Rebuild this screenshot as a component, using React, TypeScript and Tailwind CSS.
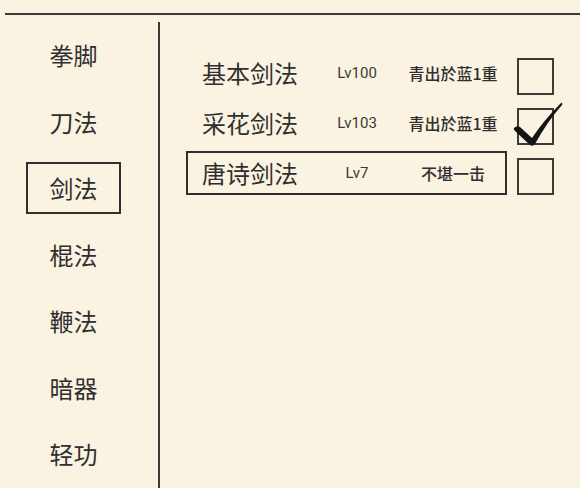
import React from "react";

const MENU = ["拳脚", "刀法", "剑法", "棍法", "鞭法", "暗器", "轻功"];
const SKILLS = [
  { name: "基本剑法", lv: "Lv100", rank: "青出於蓝1重", checked: false, current: false },
  { name: "采花剑法", lv: "Lv103", rank: "青出於蓝1重", checked: true, current: false },
  { name: "唐诗剑法", lv: "Lv7", rank: "不堪一击", checked: false, current: true },
];

const font = { fontFamily: '"Noto Sans CJK SC", "Noto Sans", sans-serif' };

function Check() {
  return (
    <svg className="absolute -left-[8px] -top-[10px]" width="56" height="50" viewBox="0 0 56 50">
      <path
        d="M3 28 Q6 25 9 27 L21 38 Q33 20 50 3 Q52 2 51 5 Q36 22 24 44 Q22 47 19 45 L4 31 Q2 29 3 28 Z"
        fill="#141414"
      />
    </svg>
  );
}

export default function App() {
  return (
    <div className="w-[580px] h-[488px] bg-[#fbf3e2] overflow-hidden text-[#2f2f2f]" style={font}>
      <div className="ml-[5px] mt-[13px] h-[2px] bg-[#3b3b37]" />
      <div className="flex mt-[7px] h-[466px]">
        {/* Categories */}
        <div className="w-[160px] shrink-0 border-r-2 border-[#3b3b37]">
          {MENU.map((m) => (
            <div key={m} className="h-[66.5px] flex items-center">
              <div
                className={`ml-[26px] w-[95px] h-[52px] flex items-center justify-center text-[24px] leading-none ${
                  m === "剑法" ? "border-2 border-[#2f2f2f]" : "border-2 border-transparent"
                }`}
              >
                {m}
              </div>
            </div>
          ))}
        </div>

        {/* Skills */}
        <div className="flex-1 pt-[26px]">
          {SKILLS.map((s) => (
            <div key={s.name} className="h-[50px] flex items-center">
              <div
                className={`ml-[26px] w-[321px] h-[44px] flex items-center pl-[14px] ${
                  s.current ? "border-2 border-[#2f2f2f]" : "border-2 border-transparent"
                }`}
              >
                <span className="w-[110px] text-[24px] leading-none">{s.name}</span>
                <span
                  className="w-[90px] text-center text-[15px] leading-none text-[#3a3a3a]"
                  style={{ fontFamily: "Roboto, sans-serif" }}
                >
                  {s.lv}
                </span>
                <span className="w-[102px] text-center text-[16px] font-medium leading-none">{s.rank}</span>
              </div>
              <div className="relative ml-[10px] mt-[6px] w-[37px] h-[37px] border-2 border-[#3b3b37]">
                {s.checked && <Check />}
              </div>
            </div>
          ))}
        </div>
      </div>
    </div>
  );
}
